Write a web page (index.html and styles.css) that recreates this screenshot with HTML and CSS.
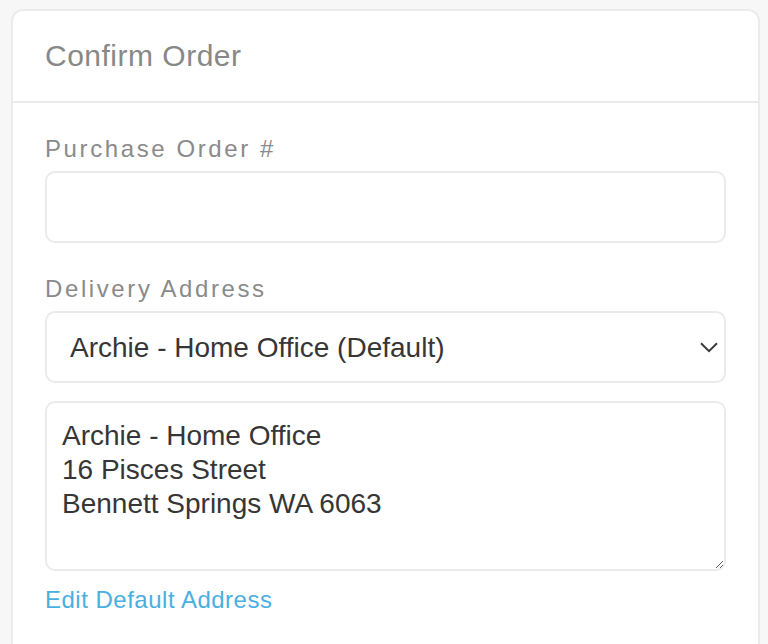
FILE: index.html
```html
<!DOCTYPE html>
<html lang="en">
<head>
<meta charset="utf-8">
<title>Confirm Order</title>
<link rel="stylesheet" href="styles.css">
</head>
<body>
  <section class="card">
    <header class="card-header">Confirm Order</header>
    <div class="card-body">
      <label class="field-label" for="po">Purchase Order #</label>
      <input class="field-input" id="po" type="text">

      <label class="field-label second" for="addr">Delivery Address</label>
      <div class="select-wrap">
        <select class="field-select" id="addr">
          <option>Archie - Home Office (Default)</option>
        </select>
        <svg class="chevron" width="18" height="11" viewBox="0 0 18 11" aria-hidden="true">
          <path d="M1 1.2 L9 9.2 L17 1.2" fill="none" stroke="#3a3a3a" stroke-width="2"/>
        </svg>
      </div>

      <textarea class="field-textarea">Archie - Home Office
16 Pisces Street
Bennett Springs WA 6063</textarea>

      <a class="edit-link" href="#">Edit Default Address</a>
    </div>
  </section>
</body>
</html>
```

FILE: styles.css
```css
html, body {
  margin: 0;
  padding: 0;
}
body {
  background: #f7f7f7;
  padding: 9px 8px 0 11px;
  font-family: "Liberation Sans", Arial, Helvetica, sans-serif;
  height: 644px;
  box-sizing: border-box;
  overflow: hidden;
  display: flex;
  flex-direction: column;
}
.card {
  flex: 1;
  background: #ffffff;
  border: 2px solid #ebebeb;
  border-bottom: 0;
  border-radius: 12px 12px 0 0;
}
.card-header {
  padding: 27px 32px;
  font-size: 30px;
  line-height: 36px;
  letter-spacing: 0.5px;
  color: #888888;
  border-bottom: 2px solid #ebebeb;
}
.card-body {
  padding: 32px 32px 0 32px;
  display: flex;
  flex-direction: column;
}
.field-label {
  display: block;
  font-size: 24px;
  line-height: 28px;
  letter-spacing: 2.6px;
  color: #8a8a8a;
  margin-bottom: 8px;
}
.field-label.second {
  margin-top: 32px;
}
.field-input,
.field-select,
.field-textarea {
  box-sizing: border-box;
  width: 100%;
  border: 2px solid #ebebeb;
  border-radius: 10px;
  background: #ffffff;
  font-family: "Liberation Sans", Arial, Helvetica, sans-serif;
  font-size: 28px;
  color: #363636;
  margin: 0;
  outline: none;
}
.field-input {
  height: 72px;
  padding: 0 23px;
}
.select-wrap {
  position: relative;
}
.field-select {
  display: block;
  height: 72px;
  padding: 0 50px 0 23px;
  -webkit-appearance: none;
  appearance: none;
}
.chevron {
  position: absolute;
  right: 8px;
  top: 31px;
  pointer-events: none;
}
.field-textarea {
  display: block;
  margin-top: 18px;
  height: 170px;
  padding: 16px 15px 14px;
  line-height: 34px;
  resize: vertical;
}
.edit-link {
  margin-top: 15px;
  font-size: 24px;
  line-height: 28px;
  letter-spacing: 0.5px;
  color: #4aafe0;
  text-decoration: none;
}
```
